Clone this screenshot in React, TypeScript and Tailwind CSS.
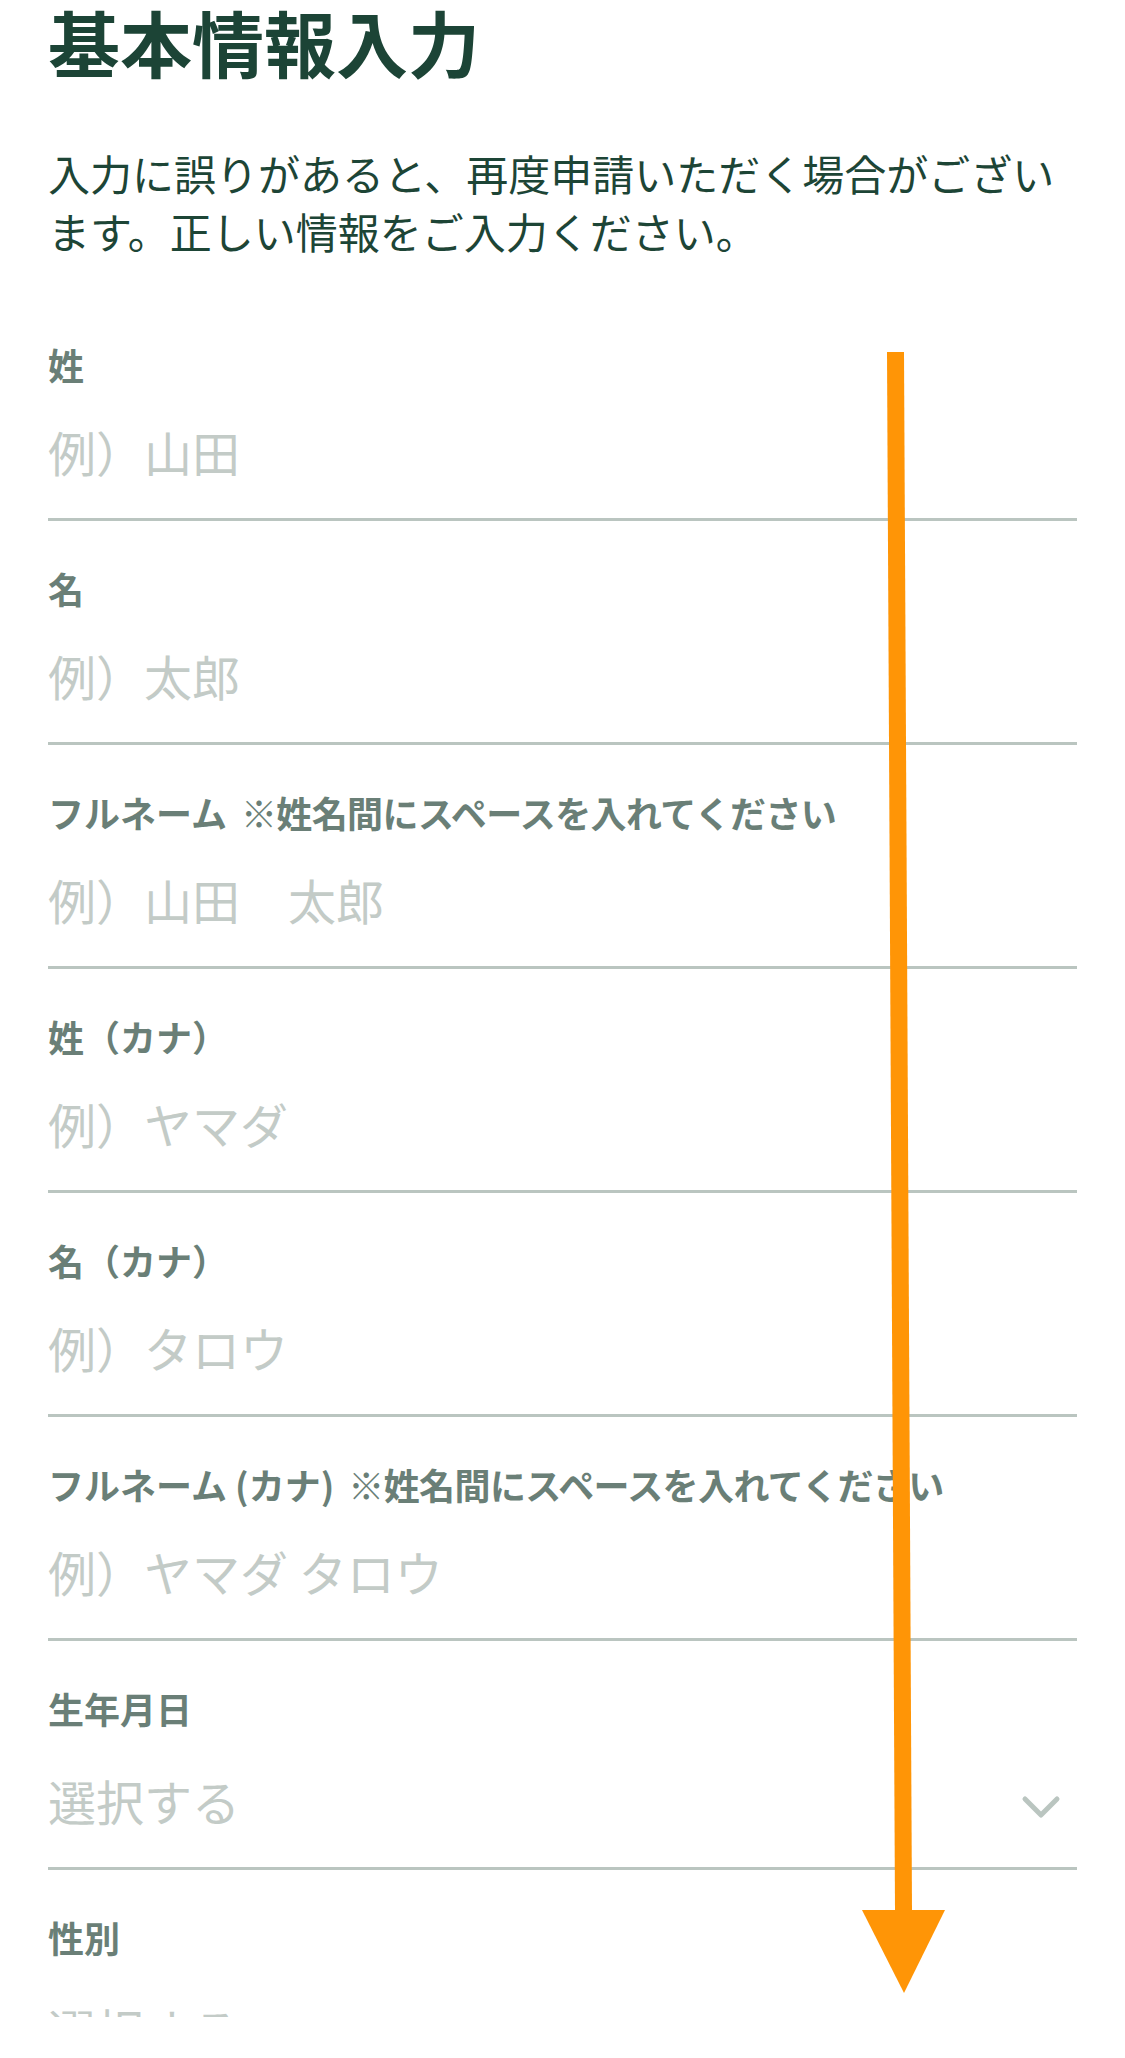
import React from "react";

interface Field {
  label: string;
  note?: string;
  placeholder: string;
  select?: boolean;
}

const NOTE = "※姓名間にスペースを入れてください";

const fields: Field[] = [
  { label: "姓", placeholder: "例）山田" },
  { label: "名", placeholder: "例）太郎" },
  { label: "フルネーム", note: NOTE, placeholder: "例）山田　太郎" },
  { label: "姓（カナ）", placeholder: "例）ヤマダ" },
  { label: "名（カナ）", placeholder: "例）タロウ" },
  { label: "フルネーム (カナ)", note: NOTE, placeholder: "例）ヤマダ タロウ" },
  { label: "生年月日", placeholder: "選択する", select: true },
  { label: "性別", placeholder: "選択する", select: true },
];

const Chevron = () => (
  <svg width="40" height="26" viewBox="0 0 40 26" className="mb-[-14px]">
    <polyline
      points="4,5 20,21 36,5"
      fill="none"
      stroke="#bac5c0"
      strokeWidth="5"
      strokeLinecap="round"
      strokeLinejoin="round"
    />
  </svg>
);

const FormField = ({ field, first }: { field: Field; first: boolean }) => {
  return (
    <div className={`border-b-[3px] border-[#bac5c0] pb-[43px] ${first ? "" : "pt-[49px]"}`}>
      <div className="text-[36px] leading-none font-bold text-[#6a7f77] whitespace-pre">
        {field.label}
        {field.note && <span className="ml-[14px] tracking-[-0.6px]">{field.note}</span>}
      </div>
      <div
        className={`flex items-center justify-between pr-[16px] ${
          field.select ? "mt-[50px]" : "mt-[45px]"
        }`}
      >
        <span className="text-[48px] leading-none text-[#c3cbc7] whitespace-pre">
          {field.placeholder}
        </span>
        {field.select && <Chevron />}
      </div>
    </div>
  );
};

const App = () => {
  return (
    <div
      className="relative w-[1125px] h-[2058px] bg-white overflow-hidden"
      style={{ fontFamily: '"Noto Sans CJK JP", "Noto Sans", sans-serif' }}
    >
      <div className="h-[2017px] overflow-hidden px-12">
        <h1 className="mt-[5px] text-[72px] leading-none font-bold text-[#1c4436]">
          基本情報入力
        </h1>
        <p className="mt-[67px] text-[42px] leading-[58px] text-[#1d4536]">
          入力に誤りがあると、再度申請いただく場合がござい
          <br />
          ます。正しい情報をご入力ください。
        </p>
        <div className="mt-[86px]">
          {fields.map((field, index) => (
            <FormField key={index} field={field} first={index === 0} />
          ))}
        </div>
      </div>

      {/* annotation arrow */}
      <svg
        className="absolute left-0 top-0 pointer-events-none"
        width="1125"
        height="2058"
        viewBox="0 0 1125 2058"
      >
        <polygon points="887,352 904,352 912,1912 895,1912" fill="#ff9506" />
        <polygon points="862,1910 945,1910 904,1993" fill="#ff9506" />
      </svg>
    </div>
  );
};

export default App;
